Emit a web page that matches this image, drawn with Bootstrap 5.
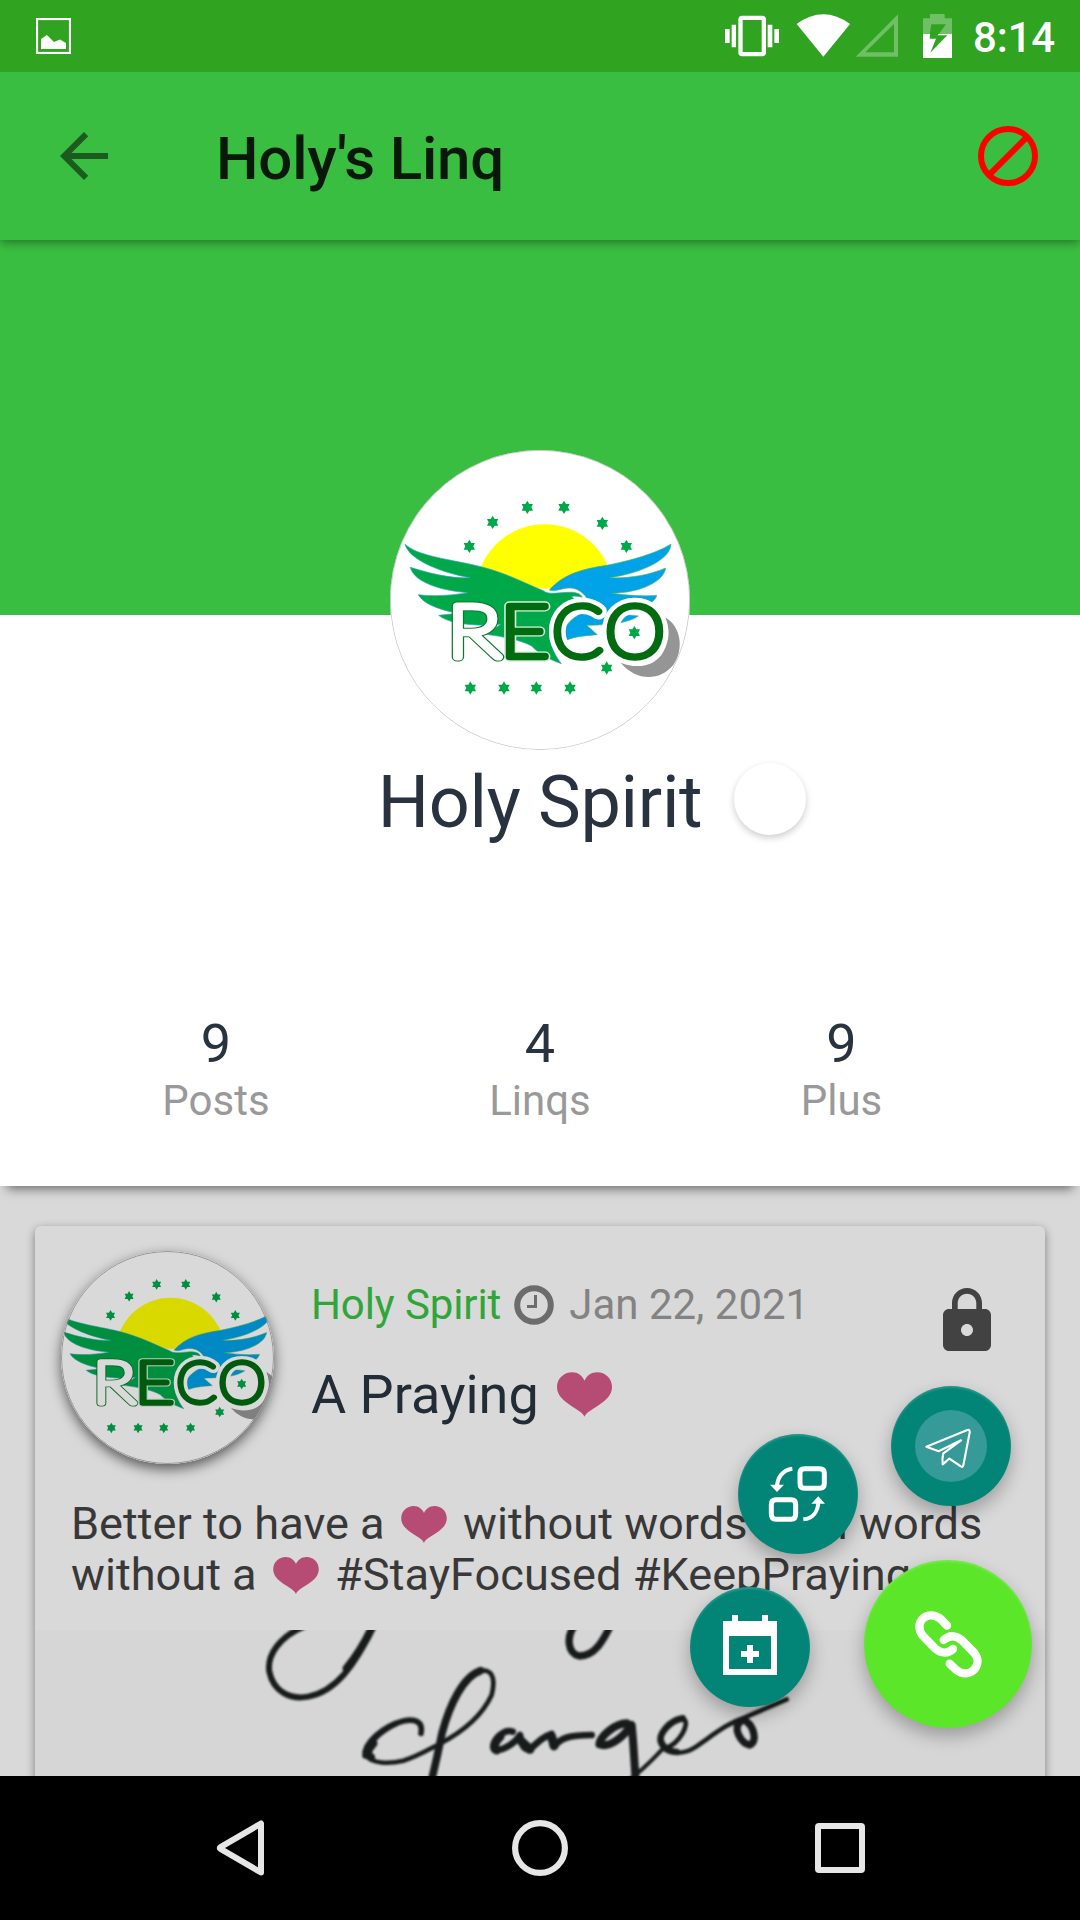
<!DOCTYPE html>
<html lang="en">
<head>
<meta charset="utf-8">
<meta name="viewport" content="width=device-width, initial-scale=1">
<title>Holy's Linq</title>
<link href="https://cdn.jsdelivr.net/npm/bootstrap@5.3.0/dist/css/bootstrap.min.css" rel="stylesheet">
<style>
body{font-family:Roboto,"Liberation Sans",sans-serif;width:1080px;height:1920px;overflow:hidden;background:#d9d9d9;color:#29333f;line-height:1.1719}
svg{display:block;flex:none}
.status-strip{height:72px;background:#30a320;color:#fff;padding:0 25px 0 36px;font-size:42px;font-weight:500;flex:none;z-index:4}
.clock-text{margin-left:20px;padding-top:3px;letter-spacing:-.2px}
.top-app{height:168px;background:#3abe41;padding:0 42px 0 60px;flex:none;z-index:3;box-shadow:0 2px 10px rgba(0,0,0,.42)}
.app-title{font-size:60px;font-weight:500;color:#09180a;margin-left:108px;padding-top:6px;letter-spacing:-.2px}
.cover{height:375px;background:#3abe41;flex:none}
.profile{height:571px;flex:none;z-index:2;box-shadow:0 10px 10px -7px rgba(0,0,0,.5)}
.photo{margin-top:-165px;width:300px;height:300px}
.name-row{display:grid;grid-template-columns:1fr auto 1fr;margin-top:11px}
.profile-name{font-size:72px;letter-spacing:-.3px}
.presence{width:72px;height:72px;margin:2px 0 0 32px;box-shadow:0 3px 7px rgba(0,0,0,.2)}
.stats{display:grid;grid-template-columns:432px 216px 387px;margin-top:167px}
.stat-num{font-size:54px}
.stat-label{font-size:42px;color:#999}
.feed{height:590px;flex:none}
.post{margin:40px 35px 0;height:560px;background:#d9d9d9;border-radius:6px 6px 0 0;box-shadow:0 3px 10px rgba(0,0,0,.42);display:flex;flex-direction:column}
.post-head{padding:25px 54px 0 25.5px}
.post-photo{width:213px;height:213px;box-shadow:0 5px 13px rgba(0,0,0,.6);background:#d9d9d9}
.post-photo svg{filter:brightness(.85)}
.post-meta{margin-left:37.5px;padding-top:29px}
.author{font-size:42px;color:#30a539;letter-spacing:-.1px}
.post-date{font-size:42px;color:#838383}
.time-icon{margin:0 15px 0 13px}
.post-title{font-size:54px;color:#222c36;margin-top:34px}
.post-title svg{margin-left:18px}
.post-text{font-size:45.15px;line-height:51px;color:#383838;margin:34px 36px 0;white-space:nowrap}
.lock{margin-top:37px}
.text-heart{display:inline-block;vertical-align:-4px;margin:0 5px}
.post-picture{margin-top:auto;background:#d6d6d6}
.ink{filter:blur(.9px)}
.fab{position:absolute;width:120px;height:120px;border-radius:50%;background:#028576;box-shadow:0 8px 18px rgba(0,0,0,.28),inset 0 2px 2px rgba(255,255,255,.15);display:flex;align-items:center;justify-content:center}
.fab-send{left:891px;top:200px}
.fab-swap{left:738px;top:248px}
.fab-event{left:690px;top:401px}
.fab-event svg{margin-top:-4px}
.fab-main{left:864px;top:374px;width:168px;height:168px;background:#5ce62a}
.sys-nav{height:144px;background:#000;padding:0 215px 0 216px;flex:none;z-index:4}
.logo-g{font-family:Lato,Roboto,sans-serif;font-size:218px;font-weight:100}
</style>
<script src="https://cdn.jsdelivr.net/npm/bootstrap@5.3.0/dist/js/bootstrap.bundle.min.js"></script>
</head>
<body class="d-flex flex-column m-0">

<svg width="0" height="0" class="position-absolute" aria-hidden="true">
  <defs>
    <path id="star" d="M0-20L6-10H17L12 0 17 10H6L0 20-6 10H-17L-12 0-17-10H-6Z"/>
    <path id="heart" d="M80 130C72 105 0 90 0 43C0 18 20 0 44 0C60 0 74 10 80 25C86 10 100 0 117 0C141 0 160 18 160 43C160 90 88 105 80 130Z"/>
    <symbol id="reco" viewBox="0 0 960 960">
      <rect width="960" height="960" fill="#fff"/>
      <path d="M290 430A206 206 0 0 1 698 430L500 446Z" fill="#ff0"/>
      <path d="M75 312C110 350 230 360 310 382C380 400 440 432 490 452C505 465 535 458 560 457C585 455 602 460 607 472C595 470 585 466 574 470C590 478 575 482 560 487C515 515 505 550 510 590C514 625 528 650 544 671C500 655 475 640 455 618C420 600 370 590 318 583L362 553C290 560 205 552 176 526L235 520C180 510 130 492 115 464C160 470 215 466 262 458C180 452 100 425 91 382C150 400 210 416 270 413C190 400 85 360 75 312Z" fill="#00a84a" stroke="#37a6c4" stroke-width="2"/>
      <path d="M508 450C550 402 610 386 680 376C750 362 830 340 873 312C872 360 780 400 690 413C750 416 810 404 857 384C852 425 780 458 697 460C740 466 790 470 830 466C825 495 770 512 690 518L775 528C750 545 710 555 620 556L652 584C610 588 570 590 548 608C545 560 570 535 620 512C640 490 610 445 570 444C545 443 525 458 508 450Z" fill="#00a2e8" stroke="#56b65b" stroke-width="2"/>
      <path d="M855 532C905 560 912 630 880 675C835 728 765 720 722 668C775 690 830 675 850 635C870 600 870 565 855 532Z" fill="#959595"/>
      <g class="logo-g" fill="#016b10" stroke-linejoin="round" stroke-linecap="round">
        <g fill="none" stroke="#fff" stroke-width="46">
          <text x="515" y="650" textLength="154" lengthAdjust="spacingAndGlyphs">C</text>
          <text x="674" y="650" textLength="181" lengthAdjust="spacingAndGlyphs">O</text>
        </g>
        <g stroke="#d5edd8" stroke-width="28">
          <text x="359" y="650" textLength="150" lengthAdjust="spacingAndGlyphs">E</text>
        </g>
        <g stroke="#016b10" stroke-width="20">
          <text x="359" y="650" textLength="150" lengthAdjust="spacingAndGlyphs">E</text>
          <text x="515" y="650" textLength="154" lengthAdjust="spacingAndGlyphs">C</text>
          <text x="674" y="650" textLength="181" lengthAdjust="spacingAndGlyphs">O</text>
        </g>
        <text x="200" y="650" textLength="162" lengthAdjust="spacingAndGlyphs" stroke="#0a7a2a" stroke-width="27">R</text>
        <text x="200" y="650" textLength="162" lengthAdjust="spacingAndGlyphs" fill="#fff" stroke="#fff" stroke-width="21">R</text>
      </g>
      <g fill="#00a84a">
        <use href="#star" x="442" y="202"/><use href="#star" x="552" y="202"/><use href="#star" x="338" y="247"/><use href="#star" x="667" y="250"/><use href="#star" x="268" y="319"/><use href="#star" x="739" y="319"/><use href="#star" x="763" y="578"/><use href="#star" x="680" y="684"/><use href="#star" x="271" y="744"/><use href="#star" x="372" y="744"/><use href="#star" x="469" y="744"/><use href="#star" x="570" y="744"/>
      </g>
    </symbol>
  </defs>
</svg>

<div class="status-strip d-flex align-items-center position-relative">
  <svg width="35" height="36" viewBox="0 0 35 36"><rect x="1" y="1" width="33" height="34" fill="none" stroke="#fff" stroke-width="2.2"/><path d="M5 21L11 17 18 24 24 21.500 30 25V31H5Z" fill="#fff"/></svg>
  <svg class="ms-auto" width="228" height="44" viewBox="75 42 684 132">
    <g fill="#fff"><path d="M75 87h14v42H75zM95 74h13v68H95zM203 74h14v68h-14zM223 87h14v42h-14z"/><rect x="121.500" y="53.500" width="70" height="109" rx="5" fill="none" stroke="#fff" stroke-width="13"/><path d="M290 72Q370 14 450 72L370 170Z"/></g>
    <path d="M467 170.500L594 43V170.500ZM496 157H582V72Z" fill="#6fbf64" fill-rule="evenodd"/>
    <path d="M690 42h44v13h22v48h-16l-24 0 22-30h-44l-5 30h-20V55h21z" fill="#6fbf64"/>
    <path d="M669 102H690L689 116H708L691 158 742 106H713L715 102H756V174H669Z" fill="#fff"/>
  </svg>
  <span class="clock-text">8:14</span>
</div>

<header class="top-app d-flex align-items-center position-relative">
  <svg width="48" height="48" viewBox="4 4 16 16"><path fill="#1c5b1f" d="M20 11H7.830l5.590-5.590L12 4l-8 8 8 8 1.410-1.410L7.830 13H20v-2z"/></svg>
  <div class="app-title">Holy's Linq</div>
  <svg class="ms-auto" width="60" height="60" viewBox="2 2 20 20"><path d="M18.360 5.640L5.640 18.360M21 12a9 9 0 1 1-18 0a9 9 0 1 1 18 0" fill="none" stroke="red" stroke-width="2"/></svg>
</header>

<div class="cover"></div>

<section class="profile bg-white position-relative">
  <svg class="photo rounded-circle mx-auto" viewBox="30 30 900 900"><use href="#reco" width="960" height="960"/><circle cx="480" cy="480" r="449" fill="none" stroke="#aaa" stroke-width="2"/></svg>
  <div class="name-row">
    <span></span>
    <div class="profile-name">Holy Spirit</div>
    <div class="presence rounded-circle bg-white"></div>
  </div>
  <div class="stats text-center">
    <div><div class="stat-num">9</div><div class="stat-label">Posts</div></div>
    <div><div class="stat-num">4</div><div class="stat-label">Linqs</div></div>
    <div><div class="stat-num">9</div><div class="stat-label">Plus</div></div>
  </div>
</section>

<main class="feed position-relative overflow-hidden">
  <article class="post">
    <div class="post-head d-flex align-items-start">
      <div class="post-photo rounded-circle flex-shrink-0">
        <svg class="rounded-circle" width="213" height="213" viewBox="81 76 804 804"><use href="#reco" width="960" height="960"/><circle cx="483" cy="478" r="400" fill="none" stroke="#999" stroke-width="3"/></svg>
      </div>
      <div class="post-meta">
        <div class="d-flex align-items-center">
          <span class="author">Holy Spirit</span>
          <svg class="time-icon" width="40" height="40" viewBox="0 0 40 40"><circle cx="20" cy="20" r="16.800" fill="none" stroke="#6c6c6c" stroke-width="6"/><path d="M21.500 10V21.500H13" fill="none" stroke="#6c6c6c" stroke-width="3"/></svg>
          <span class="post-date">Jan 22, 2021</span>
        </div>
        <div class="post-title d-flex align-items-center">A Praying<svg width="55" height="45" viewBox="0 0 160 130" fill="#b64c74"><use href="#heart"/></svg></div>
      </div>
      <svg class="lock ms-auto" width="48" height="63" viewBox="4 1 16 21"><path fill="#424242" d="M18 8h-1V6c0-2.760-2.240-5-5-5S7 3.240 7 6v2H6c-1.100 0-2 .9-2 2v10c0 1.100.9 2 2 2h12c1.100 0 2-.9 2-2V10c0-1.100-.9-2-2-2zm-6 9c-1.100 0-2-.9-2-2s.9-2 2-2 2 .9 2 2-.9 2-2 2zM8.900 8V6c0-1.710 1.390-3.100 3.100-3.100s3.100 1.390 3.100 3.100v2H8.900z"/></svg>
    </div>
    <div class="post-text">Better to have a <svg class="text-heart" width="46" height="37" viewBox="0 0 160 130" fill="#b64c74"><use href="#heart"/></svg> without words than words<br>without a <svg class="text-heart" width="46" height="37" viewBox="0 0 160 130" fill="#b64c74"><use href="#heart"/></svg> #StayFocused #KeepPraying</div>
    <svg class="post-picture" width="1010" height="156" viewBox="35 1630 1010 156">
      <g class="ink" fill="none" stroke="#181b1b" stroke-linecap="round" stroke-linejoin="round">
        <g transform="translate(240 1620) scale(.33333)">
          <path d="M190 20C120 50 80 105 88 155C100 215 150 240 205 230C285 215 345 140 400 15" stroke-width="18"/>
          <path d="M400 15Q365 90 320 145" stroke-width="24"/>
          <path d="M543 340C550 305 525 295 490 303C430 318 370 370 375 408" stroke-width="17"/>
          <path d="M470 312C420 335 378 375 383 405C390 432 450 432 490 422C530 410 560 392 598 372C660 340 725 290 755 225C770 165 750 148 722 152" stroke-width="14"/>
          <path d="M400 370Q372 400 393 412" stroke-width="25"/>
          <path d="M722 152C670 170 630 250 606 340C594 400 585 440 570 500" stroke-width="23"/>
        </g>
        <g transform="translate(480 1620) scale(.33333)">
          <path d="M285 15C258 50 262 100 298 108C345 108 370 60 390 20" stroke-width="22"/>
          <path d="M98 335C70 325 38 360 42 385C60 400 105 370 120 345C125 365 125 390 150 388C175 365 190 350 215 342L222 380C240 355 265 345 335 345" stroke-width="20"/>
          <path d="M60 350C40 370 40 385 50 390M125 365L150 388M215 350L222 378" stroke-width="27"/>
          <path d="M440 310C405 310 360 350 358 373C390 385 430 350 455 315C460 360 462 410 467 480" stroke-width="24"/>
          <path d="M440 485C490 450 520 415 545 390" stroke-width="12"/>
          <path d="M556 385C600 370 630 310 612 298C580 290 535 340 542 370C555 405 610 405 645 382C700 345 740 310 800 290L920 238" stroke-width="14"/>
          <path d="M608 295C570 300 530 345 545 370C555 390 570 395 590 396" stroke-width="20"/>
          <path d="M782 305C755 325 785 370 808 375C835 365 820 320 800 305" stroke-width="22"/>
        </g>
      </g>
    </svg>
  </article>

  <div class="fab fab-send"><svg width="72" height="72" viewBox="705 450 216 216"><circle cx="813" cy="558" r="108" fill="#359a98"/><path d="M739 560L862 510Q870 508 869 518L850 616Q848 624 841 618L808 596 788 613Q786 595 790 580L843 541 776 574Z" fill="none" stroke="#fff" stroke-width="6.500" stroke-linejoin="round"/></svg></div>
  <div class="fab fab-swap"><svg width="60" height="58" viewBox="265 615 180 174" fill="none" stroke="#fff"><path d="M361 639Q361 626 374 626H420Q434 626 434 639V670Q434 685 420 685H374Q361 685 361 670Z" stroke-width="15"/><path d="M275 733Q275 719 289 719H335Q348 719 348 733V762Q348 778 335 778H289Q275 778 275 762Z" stroke-width="15"/><path d="M338 626C307 630 293 655 292 680M371 778C400 775 415 755 416 726" stroke-width="12"/><path d="M271 674L292 696 313 674ZM395 731L416 709 436 731Z" fill="#fff" stroke="none"/></svg></div>
  <div class="fab fab-event"><svg width="54" height="60" viewBox="129 1062 162 180"><path fill="#fff" fill-rule="evenodd" d="M129 1080H156V1062H174V1080H246V1062H264V1080H291V1242H129ZM147 1125V1224H273V1125ZM201 1152h18v18h18v18h-18v18h-18v-18h-18v-18h18Z"/></svg></div>
  <div class="fab fab-main"><svg width="68" height="68" viewBox="702 1050 204 204" fill="none" stroke="#fff" stroke-width="25" stroke-linecap="round" stroke-linejoin="round"><path d="M801 1097L783 1078C743 1045 698 1087 728 1127L766 1166C785 1182 805 1181 819 1167"/><path d="M809 1211L829 1230C868 1260 912 1216 883 1179L846 1141C828 1125 808 1125 791 1140"/></svg></div>
</main>

<nav class="sys-nav d-flex align-items-center justify-content-between position-relative">
  <svg width="49" height="56" viewBox="0 0 49 56"><path d="M45 3.500V52.500L4.500 28.800Q3 28 4.500 27.200Z" fill="none" stroke="#e6e6e6" stroke-width="6" stroke-linejoin="round"/></svg>
  <svg width="56" height="56" viewBox="0 0 56 56"><circle cx="28" cy="28" r="24.900" fill="none" stroke="#e6e6e6" stroke-width="6.200"/></svg>
  <svg width="50" height="50" viewBox="0 0 50 50"><rect x="3" y="3" width="44" height="44" rx="1" fill="none" stroke="#e6e6e6" stroke-width="6"/></svg>
</nav>
</body>
</html>
